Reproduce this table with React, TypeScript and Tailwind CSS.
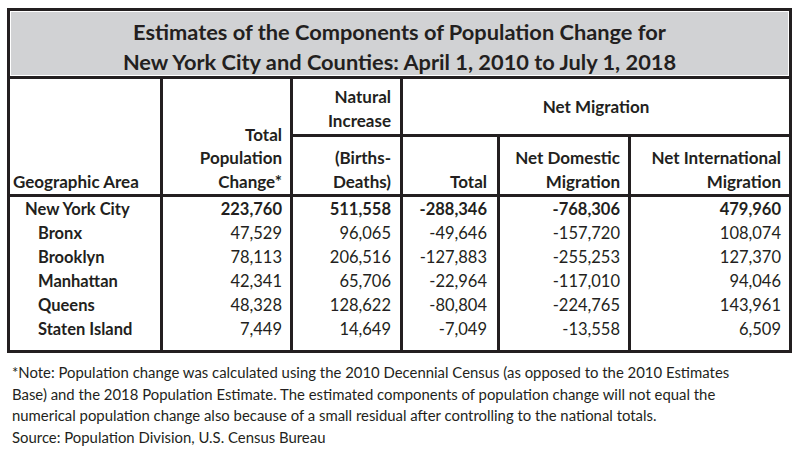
import React from 'react';

type Row = { name: string; sub: boolean; values: string[] };

const ROWS: Row[] = [
  { name: 'New York City', sub: false, values: ['223,760', '511,558', '-288,346', '-768,306', '479,960'] },
  { name: 'Bronx', sub: true, values: ['47,529', '96,065', '-49,646', '-157,720', '108,074'] },
  { name: 'Brooklyn', sub: true, values: ['78,113', '206,516', '-127,883', '-255,253', '127,370'] },
  { name: 'Manhattan', sub: true, values: ['42,341', '65,706', '-22,964', '-117,010', '94,046'] },
  { name: 'Queens', sub: true, values: ['48,328', '128,622', '-80,804', '-224,765', '143,961'] },
  { name: 'Staten Island', sub: true, values: ['7,449', '14,649', '-7,049', '-13,558', '6,509'] },
];

// value columns: width incl. left border, right padding
const COLS = [
  { w: 'w-[130px]', pr: 'pr-[8px]' },
  { w: 'w-[110px]', pr: 'pr-[9px]' },
  { w: 'w-[97px]', pr: 'pr-[10px]' },
  { w: 'w-[131px]', pr: 'pr-[8px]' },
  { w: 'w-[161px]', pr: 'pr-[8px]' },
];

export default function App() {
  return (
    <div className="w-[800px] h-[450px] bg-white text-[#231f20] font-['Lato',sans-serif] overflow-hidden pt-[8px]">
      {/* table */}
      <div className="ml-[7px] w-[785px] border-[3px] border-[#231f20]">
        <div className="h-[65px] bg-[#d1d2d4] border border-white text-center font-bold text-[21.8px] leading-[30px] pt-[5px]">
          <div>Estimates of the Components of Population Change for</div>
          <div>New York City and Counties: April 1, 2010 to July 1, 2018</div>
        </div>

        {/* header */}
        <div className="flex h-[121px] border-t-[3px] border-b-[3px] border-[#231f20] font-bold text-[17px] leading-[23.5px]">
          <div className="w-[150px] flex items-end pl-[3px] pb-[1px]">Geographic Area</div>
          <div className="w-[130px] border-l-[3px] border-[#231f20] flex flex-col justify-end items-end text-right pr-[8px] pb-[1px]">
            <div>Total</div>
            <div>Population</div>
            <div>Change*</div>
          </div>
          <div className="w-[110px] border-l-[3px] border-[#231f20] flex flex-col">
            <div className="h-[58px] border-b-[3px] border-[#231f20] flex flex-col justify-end items-end pr-[9px] pb-[2px]">
              <div>Natural</div>
              <div>Increase</div>
            </div>
            <div className="flex-1 flex flex-col justify-end items-end pr-[9px] pb-[1px]">
              <div>(Births-</div>
              <div>Deaths)</div>
            </div>
          </div>
          <div className="w-[389px] border-l-[3px] border-[#231f20] flex flex-col">
            <div className="h-[58px] border-b-[3px] border-[#231f20] flex items-center justify-center pt-[1px]">Net Migration</div>
            <div className="flex-1 flex">
              <div className="w-[94px] flex flex-col justify-end items-end pr-[10px] pb-[1px]">Total</div>
              <div className="w-[131px] border-l-[3px] border-[#231f20] flex flex-col justify-end items-end pr-[8px] pb-[1px]">
                <div>Net Domestic</div>
                <div>Migration</div>
              </div>
              <div className="w-[161px] border-l-[3px] border-[#231f20] flex flex-col justify-end items-end pr-[8px] pb-[1px]">
                <div>Net International</div>
                <div>Migration</div>
              </div>
            </div>
          </div>
        </div>

        {/* body */}
        <div className="flex h-[153px] text-[16.5px] leading-[24px]">
          <div className="w-[150px] flex flex-col">
            {ROWS.map(r => (
              <div key={r.name} className={r.sub ? 'pl-[28px] font-bold' : 'pl-[15px] font-bold'}>{r.name}</div>
            ))}
          </div>
          {COLS.map((c, ci) => (
            <div key={ci} className={`${c.w} ${c.pr} border-l-[3px] border-[#231f20] flex flex-col items-end`}>
              {ROWS.map(r => (
                <div key={r.name} className={r.sub ? '' : 'font-bold'}>{r.values[ci]}</div>
              ))}
            </div>
          ))}
        </div>
      </div>

      {/* note */}
      <div className="ml-[12px] mt-[9px] text-[14.9px] leading-[21.7px]">
        <div>*Note: Population change was calculated using the 2010 Decennial Census (as opposed to the 2010 Estimates</div>
        <div>Base) and the 2018 Population Estimate. The estimated components of population change will not equal the</div>
        <div>numerical population change also because of a small residual after controlling to the national totals.</div>
        <div>Source: Population Division, U.S. Census Bureau</div>
      </div>
    </div>
  );
}
